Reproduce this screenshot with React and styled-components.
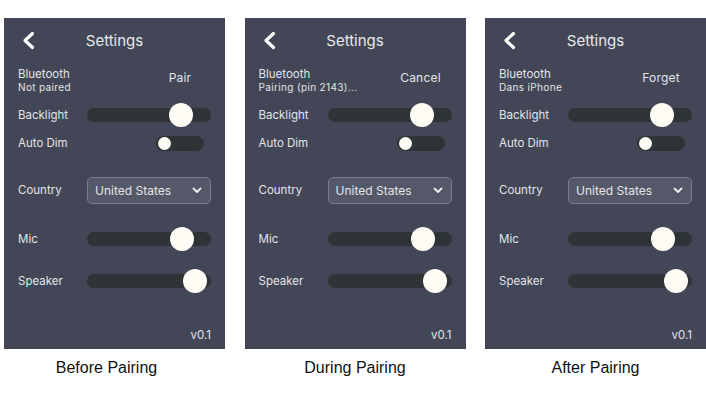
import React from 'react';
import styled, { createGlobalStyle } from 'styled-components';

const GlobalStyle = createGlobalStyle`
  body {
    margin: 0;
    background: #ffffff;
    font-family: Inter, "Noto Sans", sans-serif;
  }
`;

const Page = styled.div`
  display: flex;
  gap: 19.5px;
  padding: 18px 0 0 4px;
  width: 706px;
  height: 400px;
  box-sizing: border-box;
  overflow: hidden;
`;

const Column = styled.div`
  display: flex;
  flex-direction: column;
  width: 221px;
  flex: none;
`;

const Panel = styled.div`
  display: flex;
  flex-direction: column;
  height: 331px;
  padding: 0 14px;
  box-sizing: border-box;
  background: #424656;
  color: #e4e4e6;
`;

const Header = styled.div`
  display: grid;
  grid-template-columns: 1fr auto 1fr;
  align-items: center;
  height: 44px;
`;

const Back = styled.svg`
  width: 13px;
  height: 19px;
  margin: 1px 0 0 4px;
`;

const Title = styled.div`
  font-size: 15px;
  color: #e8e8ea;
`;

const Row = styled.div`
  display: flex;
  align-items: center;
  height: ${p => p.h || 28}px;
  margin-top: ${p => p.mt || 0}px;
`;

const Label = styled.div`
  width: 69px;
  flex: none;
  font-size: 11.5px;
`;

const BtLabel = styled.div`
  flex: 1;
  display: flex;
  flex-direction: column;
  line-height: 13px;
  font-size: 11.5px;
`;

const Sub = styled.span`
  font-size: 10px;
  letter-spacing: 0.35px;
`;

const Action = styled.div`
  width: 62px;
  text-align: center;
  font-size: 12px;
  letter-spacing: 0.2px;
  padding-bottom: 7px;
`;

const Track = styled.div`
  position: relative;
  flex: 1;
  height: 14px;
  border-radius: 7px;
  background: #2e3436;
`;

const Thumb = styled.div`
  position: absolute;
  top: -5px;
  width: 24px;
  height: 24px;
  margin-left: -12px;
  border-radius: 50%;
  background: #fffbf5;
`;

const Toggle = styled.div`
  display: flex;
  align-items: center;
  width: 48px;
  height: 15px;
  margin-left: auto;
  margin-right: 7px;
  padding: 0 2px;
  box-sizing: border-box;
  border-radius: 8px;
  background: #2e3436;
`;

const Knob = styled.div`
  width: 13px;
  height: 13px;
  border-radius: 50%;
  background: #fffbf5;
`;

const Select = styled.div`
  flex: 1;
  display: flex;
  align-items: center;
  justify-content: space-between;
  height: 27px;
  padding: 0 8px 0 7px;
  box-sizing: border-box;
  border: 1px solid #7a7e8c;
  border-radius: 5px;
  background: #545868;
  font-size: 12px;
`;

const Version = styled.div`
  margin-top: auto;
  height: 28px;
  display: flex;
  align-items: center;
  justify-content: flex-end;
  font-size: 11.5px;
`;

const Caption = styled.div`
  margin-top: 10px;
  padding-right: ${p => p.shift || 0}px;
  text-align: center;
  font-family: "Liberation Sans", Arial, sans-serif;
  font-size: 16px;
  color: #111;
`;

const Slider = ({ value }) => (
  <Track>
    <Thumb style={{ left: `${value}%` }} />
  </Track>
);

const screens = [
  { caption: 'Before Pairing', status: 'Not paired', action: 'Pair', shift: 16 },
  { caption: 'During Pairing', status: 'Pairing (pin 2143)...', action: 'Cancel' },
  { caption: 'After Pairing', status: 'Dans iPhone', action: 'Forget' },
];

const Screen = ({ status, action }) => (
  <Panel>
    <Header>
      <Back viewBox="0 0 13 19">
        <polyline points="10.5,2.5 3,9.5 10.5,16.5" fill="none" stroke="#fff" strokeWidth="3.2" strokeLinecap="round" strokeLinejoin="round" />
      </Back>
      <Title>Settings</Title>
    </Header>
    <Row h={30} mt={4}>
      <BtLabel>
        Bluetooth
        <Sub>{status}</Sub>
      </BtLabel>
      <Action>{action}</Action>
    </Row>
    <Row mt={5}>
      <Label>Backlight</Label>
      <Slider value={76} />
    </Row>
    <Row>
      <Label>Auto Dim</Label>
      <Toggle>
        <Knob />
      </Toggle>
    </Row>
    <Row mt={19}>
      <Label>Country</Label>
      <Select>
        United States
        <svg width="10" height="7" viewBox="0 0 10 7">
          <polyline points="1.5,1.5 5,5 8.5,1.5" fill="none" stroke="#f0f0f0" strokeWidth="1.8" strokeLinecap="round" strokeLinejoin="round" />
        </svg>
      </Select>
    </Row>
    <Row mt={21}>
      <Label>Mic</Label>
      <Slider value={77} />
    </Row>
    <Row mt={14}>
      <Label>Speaker</Label>
      <Slider value={87} />
    </Row>
    <Version>v0.1</Version>
  </Panel>
);

export default function App() {
  return (
    <>
      <GlobalStyle />
      <Page>
        {screens.map(s => (
          <Column key={s.caption}>
            <Screen status={s.status} action={s.action} />
            <Caption shift={s.shift}>{s.caption}</Caption>
          </Column>
        ))}
      </Page>
    </>
  );
}
